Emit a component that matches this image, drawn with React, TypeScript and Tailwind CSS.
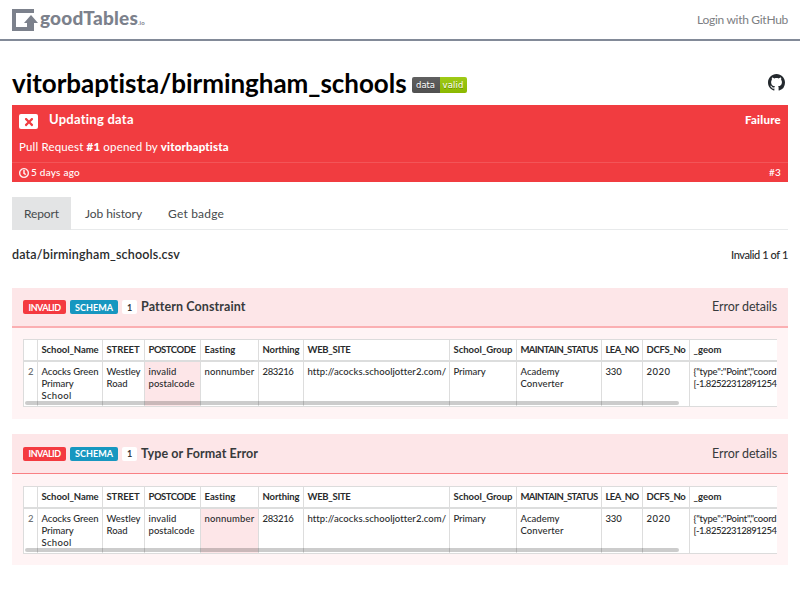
import { useLayoutEffect, useRef, useState } from "react";
import type { ReactNode } from "react";
import { FaRegClock, FaTimes } from "react-icons/fa";

function GithubIcon({ className }: { className: string }) {
  return (
    <svg className={className} viewBox="0 0 16 16" fill="currentColor">
      <path d="M8 0C3.58 0 0 3.58 0 8c0 3.54 2.29 6.53 5.47 7.59.4.07.55-.17.55-.38 0-.19-.01-.82-.01-1.49-2.01.37-2.53-.49-2.69-.94-.09-.23-.48-.94-.82-1.13-.28-.15-.68-.52-.01-.53.63-.01 1.08.58 1.23.82.72 1.21 1.87.87 2.33.66.07-.52.28-.87.51-1.07-1.78-.2-3.64-.89-3.64-3.95 0-.87.31-1.59.82-2.15-.08-.2-.36-1.02.08-2.12 0 0 .67-.21 2.2.82.64-.18 1.32-.27 2-.27s1.36.09 2 .27c1.53-1.04 2.2-.82 2.2-.82.44 1.1.16 1.92.08 2.12.51.56.82 1.27.82 2.15 0 3.07-1.87 3.75-3.65 3.95.29.25.54.73.54 1.48 0 1.07-.01 1.93-.01 2.2 0 .21.15.46.55.38A8.01 8.01 0 0 0 16 8c0-4.42-3.58-8-8-8z" />
    </svg>
  );
}

/** Single line of text whose letter spacing is adjusted to fill `w` pixels. */
function Fit({ w, className = "", children }: { w: number; className?: string; children: ReactNode }) {
  const ref = useRef<HTMLSpanElement>(null);
  const [spacing, setSpacing] = useState(0);
  useLayoutEffect(() => {
    const el = ref.current;
    if (!el) return;
    const measure = () => {
      el.style.letterSpacing = "0px";
      const natural = el.getBoundingClientRect().width;
      const next = (w - natural) / Math.max(1, (el.textContent ?? "").length);
      el.style.letterSpacing = `${next}px`;
      setSpacing(next);
    };
    measure();
    document.fonts.ready.then(measure);
  }, [w]);
  return (
    <span ref={ref} className={`inline-block shrink-0 whitespace-pre ${className}`} style={{ letterSpacing: `${spacing}px` }}>
      {children}
    </span>
  );
}

type Line = [string, number];
type Column = { name: Line; width: string; lines: Line[] };

const columns: Column[] = [
  { name: ["School_Name", 57], width: "w-[65px]", lines: [["Acocks Green", 57], ["Primary", 32], ["School", 30]] },
  { name: ["STREET", 33], width: "w-[42px]", lines: [["Westley", 34], ["Road", 21]] },
  { name: ["POSTCODE", 47], width: "w-[56px]", lines: [["invalid", 28], ["postalcode", 46]] },
  { name: ["Easting", 31], width: "w-[58px]", lines: [["nonnumber", 50]] },
  { name: ["Northing", 37], width: "w-[45px]", lines: [["283216", 31]] },
  { name: ["WEB_SITE", 43], width: "w-[146px]", lines: [["http://acocks.schooljotter2.com/", 138]] },
  { name: ["School_Group", 59], width: "w-[67px]", lines: [["Primary", 32]] },
  { name: ["MAINTAIN_STATUS", 77], width: "w-[85px]", lines: [["Academy", 39], ["Converter", 43]] },
  { name: ["LEA_NO", 33], width: "w-[41px]", lines: [["330", 16]] },
  { name: ["DCFS_No", 39], width: "w-[47px]", lines: [["2020", 24]] },
  { name: ["_geom", 28], width: "w-[100px]", lines: [['{"type":"Point","coord', 83], ["[-1.82522312891254", 83]] },
];

function DataTable({ bad, className }: { bad: number; className: string }) {
  return (
    <div className={`relative mx-[11px] h-[68px] overflow-hidden border-y border-l border-[#dcdcdc] bg-white text-[9.5px] text-[#292b2c] ${className}`}>
      <div className="flex h-[22px] w-max border-b-2 border-[#dcdddd] font-bold">
        <div className="w-[14px] shrink-0 border-r border-[#dddddd]" />
        {columns.map((c) => (
          <div key={c.name[0]} className={`${c.width} shrink-0 border-r border-[#dddddd] pl-[3.5px] pt-[3px] leading-[13px]`}>
            <Fit w={c.name[1]}>{c.name[0]}</Fit>
          </div>
        ))}
      </div>
      <div className="flex h-[45px] w-max font-medium">
        <div className="w-[14px] shrink-0 border-r border-[#dddddd] pl-[4px] pt-[4px] leading-[12px] text-[#6c7073]">2</div>
        {columns.map((c, i) => (
          <div
            key={c.name[0]}
            className={`${c.width} shrink-0 border-r border-[#dddddd] pl-[3.5px] pt-[4px] leading-[12px] ${i === bad ? "bg-[#fde6e8]" : ""}`}
          >
            {c.lines.map(([text, w]) => (
              <div key={text} className="h-[12px]">
                <Fit w={w}>{text}</Fit>
              </div>
            ))}
          </div>
        ))}
      </div>
      <div className="absolute bottom-[1px] left-[1px] h-[4px] w-[654px] rounded-full bg-black/20" />
    </div>
  );
}

type CardProps = { title: string; width: number; bad: number; className: string; headClassName: string; tableClassName: string };

function ErrorCard({ title, width, bad, className, headClassName, tableClassName }: CardProps) {
  return (
    <section className={`h-[131px] bg-[#fff4f5] ${className}`}>
      <div className={`flex items-center bg-[#fde6e8] px-[11px] text-[#373a3c] ${headClassName}`}>
        <span className="flex h-[14px] w-[43px] items-center justify-center rounded-[2px] bg-[#f43a40] text-[9px] font-bold leading-none text-white">
          <Fit w={32}>INVALID</Fit>
        </span>
        <span className="ml-[4px] flex h-[14px] w-[48px] items-center justify-center rounded-[2px] bg-[#1797c0] text-[9px] font-bold leading-none text-white">
          <Fit w={38}>SCHEMA</Fit>
        </span>
        <span className="ml-[4px] flex h-[14px] w-[15px] items-center justify-center rounded-[2px] bg-white text-[9px] font-bold leading-none">1</span>
        <Fit w={width} className="ml-[4px] mt-px text-[12.5px] font-bold">{title}</Fit>
        <Fit w={65} className="ml-auto mt-px text-[12.5px]">Error details</Fit>
      </div>
      <DataTable bad={bad} className={tableClassName} />
    </section>
  );
}

export default function App() {
  return (
    <div className="h-[600px] w-[800px] overflow-hidden bg-white font-['Lato','Open_Sans',sans-serif] text-[#373a3c]">
      <header className="flex h-[41px] items-center border-b-2 border-b-[#828a98] px-[12px]">
        <svg className="h-[22px] w-[26px] shrink-0" viewBox="0 0 26 22" fill="#7c818c">
          <path d="M0 0h22v4H4v14h11v-4h-3l7-8 7 8h-4v8H0z" />
        </svg>
        <Fit w={98} className="-mt-[3px] ml-[2px] text-[19px] font-black text-[#7c818c]">goodTables</Fit>
        <Fit w={7} className="mt-[5px] text-[6px] font-bold text-[#7c818c]">.io</Fit>
        <Fit w={91} className="ml-auto text-[12px] text-[#7c7e82]">Login with GitHub</Fit>
      </header>

      <main className="px-[12px]">
        <div className="flex h-[64px] items-center pt-[20px]">
          <Fit w={395} className="text-[26px] font-bold leading-[30px] text-black">vitorbaptista/birmingham_schools</Fit>
          <span className="ml-[5px] mt-[3px] flex h-[16px] overflow-hidden rounded-[2px] font-['DejaVu_Sans'] text-[8.5px] leading-[16px] text-white [text-shadow:0_1px_0_rgba(0,0,0,0.3)]">
            <span className="flex w-[28px] justify-center bg-linear-to-b from-[#606060] to-[#505050]"><Fit w={19}>data</Fit></span>
            <span className="flex w-[27px] justify-center bg-linear-to-b from-[#9fca16] to-[#8bb800]"><Fit w={21}>valid</Fit></span>
          </span>
          <GithubIcon className="-mt-px ml-auto mr-[3px] size-[17px] text-[#24292e]" />
        </div>

        <section className="h-[77px] bg-[#f13c40] text-white">
          <div className="flex h-[30px] items-center px-[7px]">
            <span className="mt-[3px] flex h-[15px] w-[19px] items-center justify-center rounded-[2px] bg-white">
              <FaTimes className="size-[12px] text-[#f13c40]" />
            </span>
            <Fit w={85} className="ml-[11px] text-[13px] font-bold">Updating data</Fit>
            <Fit w={36} className="ml-auto text-[11.5px] font-black">Failure</Fit>
          </div>
          <div className="h-[27px] px-[7px] pt-[4px] text-[11.5px] leading-[16px]">
            <Fit w={210}>
              Pull Request <b className="font-black">#1</b> opened by <b className="font-black">vitorbaptista</b>
            </Fit>
          </div>
          <div className="flex h-[20px] items-center border-t border-t-[#f35558] px-[7px] text-[10px] font-medium">
            <FaRegClock className="size-[10px] stroke-white stroke-[20px]" />
            <Fit w={49} className="ml-[2px]">5 days ago</Fit>
            <Fit w={12} className="ml-auto">#3</Fit>
          </div>
        </section>

        <nav className="mt-[15px] flex h-[33px] items-center border-b border-b-[#e8eaeb] text-[12px] text-[#464a4c]">
          <span className="flex h-[33px] w-[59px] items-center justify-center bg-[#e3e4e5] pt-px"><Fit w={35}>Report</Fit></span>
          <Fit w={57} className="ml-[14px] mt-px">Job history</Fit>
          <Fit w={56} className="ml-[26px] mt-px">Get badge</Fit>
        </nav>

        <div className="flex h-[51px] items-center text-[#292b2c]">
          <Fit w={168} className="text-[12.5px] font-semibold">data/birmingham_schools.csv</Fit>
          <Fit w={57} className="ml-auto text-[11px] font-medium">Invalid 1 of 1</Fit>
        </div>

        <ErrorCard
          className="mt-[7px]"
          headClassName="h-[40px] border-b-2 border-b-[#fbafb2]"
          tableClassName="mt-[11px]"
          title="Pattern Constraint"
          width={104}
          bad={2}
        />
        <ErrorCard
          className="mt-[15px]"
          headClassName="h-[40px] border-b border-b-[#f98084]"
          tableClassName="mt-[12px]"
          title="Type or Format Error"
          width={117}
          bad={3}
        />
      </main>
    </div>
  );
}
